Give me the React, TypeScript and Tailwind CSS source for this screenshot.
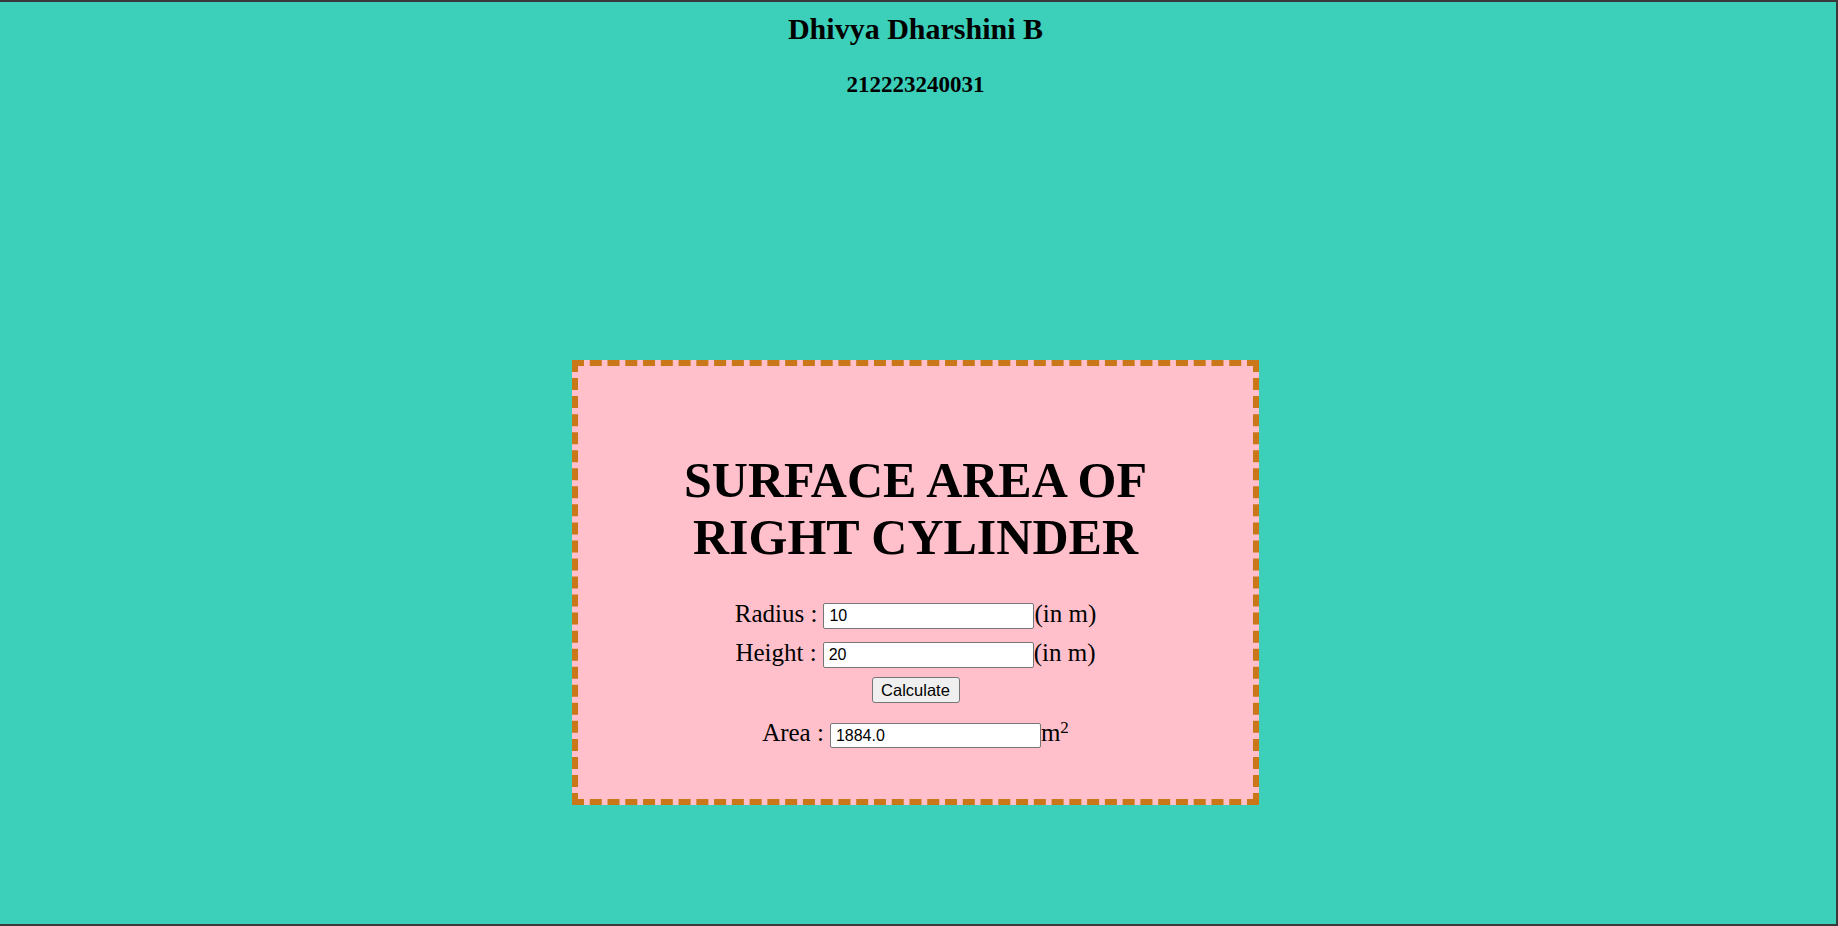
import React from "react";

const serif = "font-['Liberation_Serif','Times_New_Roman',serif]";
const sans = "font-['Liberation_Sans',Arial,sans-serif]";

interface FieldRowProps {
  label: string;
  value: string;
  unit: React.ReactNode;
  short?: boolean;
}

// tiny joiner, avoids pulling in clsx for two strings
function cx(...parts: (string | false | undefined)[]) {
  return parts.filter(Boolean).join(" ");
}

function FieldRow({ label, value, unit, short }: FieldRowProps) {
  return (
    <div className={cx("flex items-center justify-center", short ? "h-[25px]" : "h-[26px]")}>
      <span className={`${serif} text-[25px] leading-[28px] mr-[6px] mb-[5px] text-black`}>
        {label}
      </span>
      <input
        type="text"
        defaultValue={value}
        className={cx(
          `${sans} w-[211px] bg-white border border-[#767676] rounded-[2px] pl-[5px] text-[16px] text-black outline-none`,
          short ? "h-[25px]" : "h-[26px]",
        )}
      />
      <span className={`${serif} text-[25px] leading-[28px] mb-[5px] text-black whitespace-nowrap`}>
        {unit}
      </span>
    </div>
  );
}

export default function App() {
  return (
    <div className="h-[926px] w-[1838px] bg-[#3ccfb9] border-t-2 border-r-2 border-b-2 border-[#3a3a3a] overflow-hidden">
      <div className="w-[1831px] -mt-[2px]">
        {/* Header */}
        <h1 className={`${serif} pt-[12px] text-center text-[30px] leading-[34px] font-bold text-black`}>
          Dhivya Dharshini B
        </h1>
        <h3 className={`${serif} mt-[26px] text-center text-[23px] leading-[26px] font-bold text-black`}>
          212223240031
        </h3>

        {/* Calculator card */}
        <div className="mx-auto mt-[262px] w-[687px] bg-[#ffc0cb] border-[6px] border-dashed border-[#c97719] pt-[86px] pb-[51px]">
          <h1 className={`${serif} text-center text-[50px] leading-[57px] font-bold text-black`}>
            SURFACE AREA OF
            <br />
            RIGHT CYLINDER
          </h1>

          <div className="mt-[37px] flex flex-col">
            <FieldRow label="Radius :" value="10" unit="(in m)" />
            <div className="mt-[13px]">
              <FieldRow label="Height :" value="20" unit="(in m)" />
            </div>
            <div className="mt-[9px] flex justify-center">
              <button
                type="button"
                className={`${sans} h-[26px] w-[88px] bg-[#efefef] border border-[#767676] rounded-[3px] text-[16.5px] text-black`}
              >
                Calculate
              </button>
            </div>
            <div className="mt-[20px]">
              <FieldRow
                label="Area :"
                value="1884.0"
                short
                unit={
                  <>
                    m<sup className="text-[17px] -top-[8px]">2</sup>
                  </>
                }
              />
            </div>
          </div>
        </div>
      </div>
    </div>
  );
}
